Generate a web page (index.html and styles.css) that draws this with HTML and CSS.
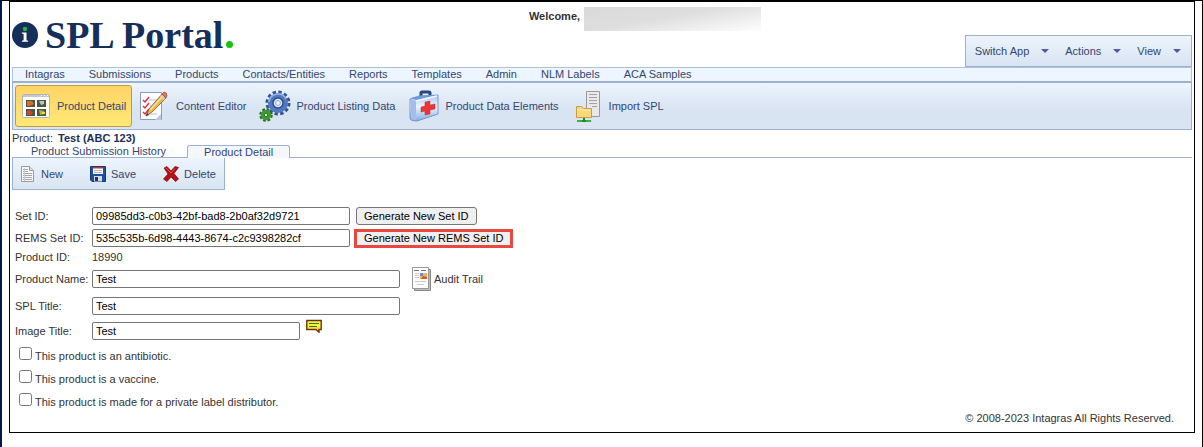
FILE: index.html
```html
<!DOCTYPE html>
<html lang="en">
<head>
<meta charset="utf-8">
<title>SPL Portal</title>
<link rel="stylesheet" href="styles.css">
</head>
<body>
<div class="frame">
  <header class="header">
    <div class="brand">
      <svg class="brand-mark" viewBox="0 0 26 26" aria-hidden="true">
        <circle cx="13" cy="13" r="13" fill="#152e5a"/>
        <circle cx="13" cy="7" r="2.2" fill="#2fb344"/>
        <path d="M9.8 10.6h4.700v7.600l1.600.6v.9H9.900v-.9l1.700-.6v-6.200l-1.800-.5z" fill="#fff"/>
      </svg>
      <span class="brand-name">SPL Portal</span><span class="brand-dot"></span>
    </div>
    <div class="welcome"><span>Welcome,</span><span class="user-mask"></span></div>
    <div class="app-menu">
      <button type="button">Switch App <i class="caret"></i></button>
      <button type="button">Actions <i class="caret"></i></button>
      <button type="button">View <i class="caret"></i></button>
    </div>
  </header>

  <nav class="main-nav">
    <a href="#">Intagras</a><a href="#">Submissions</a><a href="#">Products</a><a href="#">Contacts/Entities</a><a href="#">Reports</a><a href="#">Templates</a><a href="#">Admin</a><a href="#">NLM Labels</a><a href="#">ACA Samples</a>
  </nav>

  <div class="ribbon">
    <button type="button" class="ribbon-item selected">
      <svg class="icon-large" viewBox="0 0 32 32" aria-hidden="true">
        <rect x="2.500" y="4.500" width="27" height="23" rx="1" fill="#fcfcfa" stroke="#b5b5b0"/>
        <path d="M3 5h26v2H3z" fill="#c3c8cf"/>
        <path d="M21 5.500h1M24 5.500h1M27 5.500h1" stroke="#fff"/>
        <path d="M6 10h9v7H6zM17 10h9v7h-9zM6 19h9v7H6zM17 19h9v7h-9z" fill="#4b5745"/>
        <path d="M7 11h5l2 3-4 2H7z" fill="#df6b20"/>
        <path d="M19 11h5v3l-3 1z" fill="#c0c6bd"/>
        <path d="M7 21l3-1 3 3-3 2H7z" fill="#e0402a"/>
        <path d="M19 20l5 1v3l-4 1z" fill="#a9b54a"/>
        <path d="M22 22h3v2h-3z" fill="#f5db38"/>
      </svg>
      Product Detail
    </button>
    <button type="button" class="ribbon-item">
      <svg class="icon-large" viewBox="0 0 32 32" aria-hidden="true">
        <path d="M1.500 2.500h21v27h-21z" fill="#fbfcff" stroke="#8d9cb8"/>
        <path d="M22 24v6H16z" fill="#bac7dd"/>
        <path d="M4 10l2 2 4-5M4 16l2 2 4-5M4 22l2 2 4-5" fill="none" stroke="#d73543" stroke-width="1.500"/>
        <path d="M10 10h8M11 16h3M10 24h8" stroke="#bbc3d0"/>
        <path d="M7 26l3-7L23 4l4 4-14 14z" fill="#edb64b" stroke="#795929" stroke-width=".8"/>
        <path d="M11 20L24 6" stroke="#ffe199" stroke-width="1.500"/>
        <path d="M23 4l2-2q3 0 3 4l-1 2z" fill="#d97866" stroke="#8b4f45" stroke-width=".7"/>
        <path d="M21.500 5.500l4 4" stroke="#d0d2d6" stroke-width="1.500"/>
        <path d="M7 26l1-3 2 2z" fill="#333"/>
      </svg>
      Content Editor
    </button>
    <button type="button" class="ribbon-item">
      <svg class="icon-large" viewBox="0 0 32 32" aria-hidden="true">
        <circle cx="19" cy="13" r="11" fill="none" stroke="#34558f" stroke-width="3" stroke-dasharray="3.400 2.360"/>
        <circle cx="19" cy="13" r="7.500" fill="none" stroke="#5279bf" stroke-width="5"/>
        <path d="M10 12a9 9 0 0 1 17-3" fill="none" stroke="#9bb3df" stroke-width="1.500"/>
        <circle cx="19" cy="13" r="5" fill="#e3ebf7" stroke="#294b88" stroke-width="1.500"/>
        <circle cx="19" cy="13" r="2.500" fill="#e7eff9" stroke="#93abd0"/>
        <circle cx="7" cy="25" r="5.300" fill="none" stroke="#246d20" stroke-width="3" stroke-dasharray="2.500 1.660"/>
        <circle cx="7" cy="25" r="3.500" fill="none" stroke="#3c9b30" stroke-width="3.500"/>
        <circle cx="7" cy="25" r="1.700" fill="#d7efd0" stroke="#2c7426"/>
      </svg>
      Product Listing Data
    </button>
    <button type="button" class="ribbon-item">
      <svg class="icon-large" viewBox="0 0 32 32" aria-hidden="true">
        <defs><linearGradient id="case" x1="0" y1="0" x2="0" y2="1"><stop offset="0" stop-color="#a9c7f2"/><stop offset=".45" stop-color="#eef5fe"/><stop offset="1" stop-color="#86aae2"/></linearGradient></defs>
        <path d="M13 7V3q0-1 1-1h7q1 0 1 1v3" fill="none" stroke="#27477f" stroke-width="3"/>
        <path d="M2 9l9-3 19-1v19L9 31q-7 0-7-3z" fill="url(#case)" stroke="#6288c3" stroke-width=".8"/>
        <path d="M3 9l5 2v19q-5 0-5-3z" fill="#a2bfeb"/>
        <path d="M3 8l8-2 18-1-21 5z" fill="#6c98de"/>
        <path d="M8 11l21-5" stroke="#f2f7ff" stroke-width="1.500"/>
        <path d="M17 12l5-1v4l5-1v5l-5 1v4l-5 1v-4l-4 1v-5l4-1z" fill="#ed3437" stroke="#c62a32" stroke-width=".5"/>
      </svg>
      Product Data Elements
    </button>
    <button type="button" class="ribbon-item">
      <svg class="icon-large" viewBox="0 0 32 32" aria-hidden="true">
        <path d="M14.500 1.500h13v25h-13z" fill="#e9e9e9" stroke="#999"/>
        <path d="M17 4.500h8M17 7.500h8M17 10.500h8M17 13.500h8M20 16.500h5" stroke="#a3a3a3"/>
        <path d="M4.500 27.500v-11h5l2 2h8v9z" fill="#f8d878" stroke="#c79c43"/>
        <path d="M5 20h14" stroke="#fff0b5"/>
        <path d="M5 31h14" stroke="#35b53a" stroke-width="2"/>
        <path d="M12 28v4M10 31h4" stroke="#1d8b2c" stroke-width="2"/>
      </svg>
      Import SPL
    </button>
  </div>

  <p class="context">Product: <strong>Test (ABC 123)</strong></p>

  <div class="tabs">
    <a class="tab" href="#">Product Submission History</a>
    <a class="tab active" href="#" aria-current="page">Product Detail</a>
  </div>

  <div class="actions">
    <button type="button">
      <svg class="icon-small" viewBox="0 0 16 16" aria-hidden="true">
        <path d="M1.500.5h8l4 4v11h-12z" fill="#f8f8f8" stroke="#9b9b9b"/>
        <path d="M9.500.5v4h4" fill="#ddd" stroke="#9b9b9b"/>
        <path d="M3 3.500h5M3 5.500h5M3 7.500h9M3 9.500h9M3 11.500h9M3 13.500h9" stroke="#a4a9b0"/>
        <path d="M4.500 2v13" stroke="#ccc"/>
      </svg>New
    </button>
    <button type="button">
      <svg class="icon-small" viewBox="0 0 16 16" aria-hidden="true">
        <path d="M.5.5h15v15H2l-1.500-1.500z" fill="#1d519d" stroke="#153a73"/>
        <path d="M3 1h10v7H3z" fill="#fff"/>
        <path d="M3 1h10v1.500H3z" fill="#c93636"/>
        <path d="M4 4.500h8M4 6.500h8" stroke="#b5b5b5"/>
        <path d="M4 10h8v5.500H4z" fill="#d5dbe3"/>
        <path d="M5 11h3v4H5z" fill="#1b3867"/>
      </svg>Save
    </button>
    <button type="button">
      <svg class="icon-small" viewBox="0 0 16 16" aria-hidden="true">
        <path d="M1 2l3-1.500 4 4.500 4-4.500 3.500 1L11 7.500l4.500 5.500-3 2.500L8 11l-4 4.500L.5 13 5 8z" fill="#b40f12" stroke="#7c0c0e" stroke-width=".7"/>
        <path d="M3 2l5 5 4-4.500" fill="none" stroke="#db5754"/>
      </svg>Delete
    </button>
  </div>

  <form class="form">
    <div class="row"><label for="set-id">Set ID:</label><input class="id-box" id="set-id" type="text" value="09985dd3-c0b3-42bf-bad8-2b0af32d9721"><button class="push" type="button">Generate New Set ID</button></div>
    <div class="row"><label for="rems-id">REMS Set ID:</label><input class="id-box" id="rems-id" type="text" value="535c535b-6d98-4443-8674-c2c9398282cf"><button class="push marked" type="button">Generate New REMS Set ID</button></div>
    <div class="row row-text"><span class="caption">Product ID:</span><span>18990</span></div>
    <div class="row row-name"><label for="name">Product Name:</label><input class="wide-box" id="name" type="text" value="Test">
      <a class="audit" href="#">
        <svg class="icon-audit" viewBox="0 0 20 24" aria-hidden="true">
          <path d="M2.500 2.500h16v21h-16z" fill="#bdbdbd" stroke="#888"/>
          <path d="M.5.5h16v21H.5z" fill="#fdfdfd" stroke="#999"/>
          <path d="M2 3.500h5M9 3.500h5" stroke="#777"/>
          <path d="M3 6.500h4M3 8.500h4M3 10.500h4M3 14.500h11M5 17.500h7" stroke="#ccc"/>
          <path d="M8 6h7v6H8z" fill="#f6b456"/>
          <path d="M8 6h3v3H8z" fill="#6c8bd0"/>
          <path d="M9 12l2-3 4 1v2z" fill="#e0552f"/>
        </svg>Audit Trail</a>
    </div>
    <div class="row row-spl"><label for="spl-title">SPL Title:</label><input class="wide-box" id="spl-title" type="text" value="Test"></div>
    <div class="row row-image"><label for="image-title">Image Title:</label><input class="short-box" id="image-title" type="text" value="Test">
      <svg class="icon-note" viewBox="0 0 16 14" role="img" aria-label="Note">
        <path d="M.8 1.500h14.400v9H13v2.700l-3-2.700H.8z" fill="#fff04a" stroke="#6b3408" stroke-width="1.400"/>
        <path d="M2 9.200h12" stroke="#f5b52c"/>
        <path d="M3 4.500h10M3 7.500h8" stroke="#2f7a1f"/>
      </svg>
    </div>
    <div class="check"><input id="antibiotic" type="checkbox"><label for="antibiotic">This product is an antibiotic.</label></div>
    <div class="check"><input id="vaccine" type="checkbox"><label for="vaccine">This product is a vaccine.</label></div>
    <div class="check"><input id="private-label" type="checkbox"><label for="private-label">This product is made for a private label distributor.</label></div>
  </form>

  <footer class="footer">© 2008-2023 Intagras All Rights Reserved.</footer>
</div>
</body>
</html>
```
FILE: styles.css
```css
* { box-sizing: border-box; }

html {
  min-height: 100%;
  display: flex;
  flex-direction: column;
  background: #fff;
}

body {
  flex: 1;
  margin: 0;
  padding: 0 7px;
  border: 1px solid #000;
  border-left: 2px solid #001a4d;
  border-bottom: 0;
  font: 11px/14px Arial, "Liberation Sans", sans-serif;
  color: #333;
}

button, input { font: inherit; }
a { color: inherit; text-decoration: none; }
svg { display: block; flex: none; }

.frame {
  border: 1px solid #000;
  padding: 0 2px 8px;
}

.header {
  display: grid;
  grid-template-columns: 1fr auto 1fr;
  height: 65px;
}

.brand {
  display: flex;
  align-items: center;
}

.brand-mark { width: 26px; height: 26px; }

.brand-name {
  margin-left: 7px;
  font: bold 38px/64px "Liberation Serif", serif;
  color: #152e5a;
  white-space: nowrap;
}

.brand-dot {
  width: 7px;
  height: 7px;
  margin: 20px 0 0 3px;
  border-radius: 50%;
  background: #16c60c;
}

.welcome {
  display: flex;
  gap: 4px;
  padding-top: 5px;
  padding-left: 86px;
  font-weight: bold;
  line-height: 18px;
}

.user-mask {
  width: 177px;
  height: 24px;
  background: linear-gradient(170deg, #dadada 10%, #dedede 45%, #fbfbfb 95%);
}

.app-menu {
  justify-self: end;
  align-self: end;
  display: flex;
  gap: 16px;
  height: 32px;
  padding: 0 10px 0 9px;
  border: 1px solid #9bb1d1;
  background: linear-gradient(#edf4fc, #d8e4f2);
}

.app-menu button,
.actions button,
.ribbon-item {
  display: flex;
  align-items: center;
  padding: 0;
  border: 0;
  background: none;
  color: #33466f;
  white-space: nowrap;
}

.app-menu button { gap: 12px; }

.caret {
  border: 4px solid transparent;
  border-top-color: #5059a5;
  border-bottom: 0;
}

.main-nav {
  display: flex;
  gap: 24px;
  padding: 0 12px;
  border: 1px solid #aec2de;
  border-bottom-color: #9bb1d1;
  background: #edf5fe;
  color: #33466f;
  line-height: 13px;
}

.ribbon {
  display: flex;
  gap: 2px;
  padding: 2px;
  border: 1px solid #9bb1d1;
  background: linear-gradient(#edf5fe, #d8e4f2 60%, #d9e5f3);
}

.ribbon-item {
  height: 42px;
  gap: 5px;
  padding: 0 5px 0 4px;
  border: 1px solid transparent;
}

.ribbon-item.selected {
  border-color: #c49a3f;
  border-radius: 3px;
  background: linear-gradient(#ffd366, #ffe877);
}

.icon-large { width: 32px; height: 32px; }

.context { margin: 1px 0 0; }
.context strong { margin-left: 2px; color: #1c2f5c; }

.tabs {
  display: flex;
  align-items: flex-end;
  gap: 21px;
  padding-left: 19px;
  border-bottom: 1px solid #9bb1d1;
  color: #33466f;
  line-height: 12px;
}

.tab.active {
  margin-bottom: -1px;
  padding: 0 16px;
  border: 1px solid #9bb1d1;
  border-bottom: 0;
  border-radius: 3px 3px 0 0;
  background: #f4f8fd;
}

.actions {
  display: flex;
  width: fit-content;
  gap: 27px;
  height: 32px;
  padding: 0 8px 0 7px;
  border: 1px solid #9bb1d1;
  border-top: 0;
  background: linear-gradient(#edf5fe, #d8e4f2);
}

.actions button { gap: 5px; }
.icon-small { width: 16px; height: 16px; }

.form { padding: 15px 3px 0; }

.row {
  display: flex;
  align-items: center;
  height: 22px;
}

.row label, .caption { width: 77px; flex: none; white-space: nowrap; }
.row-text { height: 16px; }
.row-name { height: 28px; }
.row-spl { height: 26px; }
.row-image { height: 24px; }

.row input {
  height: 18px;
  padding: 0 3px;
  border: 1px solid #767676;
  border-radius: 2px;
  background: #fff;
  color: #000;
}

.id-box { width: 258px; }
.wide-box { width: 308px; }
.short-box { width: 208px; }

.push {
  height: 18px;
  margin-left: 6px;
  padding: 0 7px;
  border: 1px solid #767676;
  border-radius: 3px;
  background: #efefef;
  color: #000;
  line-height: 16px;
  white-space: nowrap;
}

.push.marked {
  height: 19px;
  margin-left: 4px;
  border: 3px solid #e8483f;
  border-radius: 0;
  line-height: 13px;
}

.audit {
  display: flex;
  align-items: center;
  gap: 2px;
  margin-left: 12px;
}

.icon-audit { width: 20px; height: 24px; }

.icon-note {
  align-self: flex-start;
  width: 16px;
  height: 14px;
  margin-left: 6px;
}

.check {
  display: flex;
  align-items: flex-end;
  gap: 3px;
  height: 23px;
}

.check input {
  width: 13px;
  height: 13px;
  margin: 0 0 6px 4px;
}

.check label { line-height: 20px; }

.footer {
  padding-right: 18px;
  line-height: 12px;
  text-align: right;
}
```
